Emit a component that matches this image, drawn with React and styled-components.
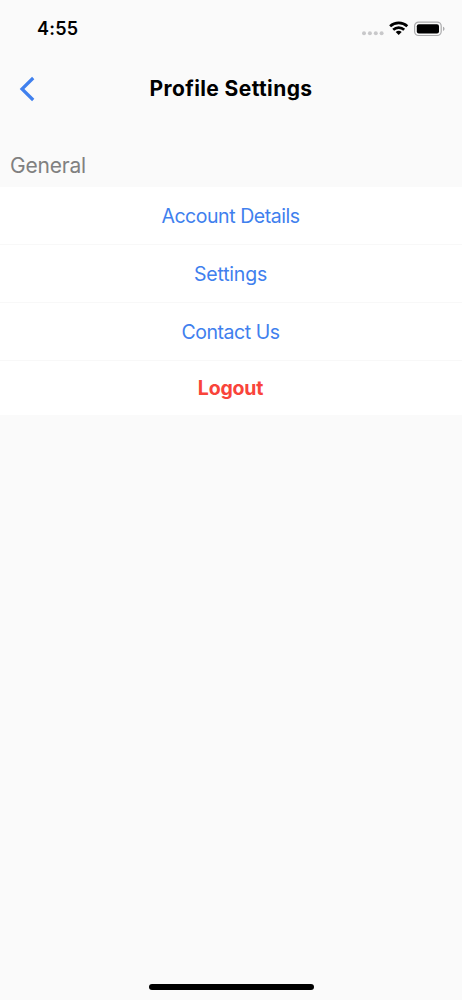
import React from 'react';
import styled, { createGlobalStyle } from 'styled-components';

const GlobalStyle = createGlobalStyle`
  * {
    box-sizing: border-box;
  }

  body {
    margin: 0;
    background: #fafafa;
    font-family: Inter, "Liberation Sans", sans-serif;
  }
`;

const Screen = styled.div`
  display: flex;
  flex-direction: column;
  height: 1000px;
  overflow: hidden;
  background: #fafafa;
`;

const StatusBar = styled.div`
  display: flex;
  align-items: center;
  justify-content: space-between;
  height: 57px;
  padding: 0 17px 0 37px;
`;

const Time = styled.span`
  font-size: 18px;
  font-weight: 600;
  letter-spacing: 0.2px;
  color: #000;
`;

const StatusIcons = styled.svg`
  display: block;
  width: 84px;
  height: 20px;
`;

const Header = styled.header`
  display: grid;
  grid-template-columns: 54px 1fr 54px;
  align-items: center;
  height: 64px;
`;

const BackButton = styled.button`
  display: flex;
  padding: 0 0 0 18px;
  border: 0;
  background: none;

  svg {
    display: block;
  }
`;

const Title = styled.h1`
  margin: 0;
  font-size: 21px;
  font-weight: 650;
  line-height: 26px;
  letter-spacing: 0.4px;
  text-align: center;
  white-space: nowrap;
  color: #000;
`;

const SectionTitle = styled.h2`
  margin: 0;
  padding: 32px 10px 8px;
  font-size: 21px;
  font-weight: 400;
  line-height: 26px;
  letter-spacing: -0.2px;
  color: #808080;
`;

const Item = styled.button`
  display: block;
  width: 100%;
  height: ${props => (props.$danger ? '54px' : '58px')};
  padding: 0 1px 0 0;
  border: 0;
  border-bottom: ${props => (props.$danger ? '0' : '1px solid #f8f8f8')};
  background: #fff;
  font-family: inherit;
  font-size: 19.5px;
  font-weight: ${props => (props.$danger ? 650 : 400)};
  color: ${props => (props.$danger ? '#f9443a' : '#4080ee')};
  letter-spacing: ${props => props.$spacing};
`;

const HomeBar = styled.div`
  width: 165px;
  height: 6px;
  margin: auto auto 10px 149px;
  border-radius: 3px;
  background: #000;
`;

const items = [
  { label: 'Account Details', spacing: '-0.45px' },
  { label: 'Settings', spacing: '-0.2px' },
  { label: 'Contact Us', spacing: '-0.45px' },
  { label: 'Logout', spacing: '-0.2px', danger: true },
];

export default function App() {
  return (
    <Screen>
      <GlobalStyle />
      <StatusBar>
        <Time>4:55</Time>
        <StatusIcons viewBox="0 0 84 20">
          <g fill="#c8c8ca">
            <circle cx="3" cy="14.3" r="2" />
            <circle cx="8.9" cy="14.3" r="2" />
            <circle cx="14.8" cy="14.3" r="2" />
            <circle cx="20.6" cy="14.3" r="2" />
          </g>
          <g fill="none" stroke="#000" strokeWidth="2.7">
            <path d="M29.1 7.2a12.6 12.6 0 0 1 17.2 0" />
            <path d="M32.2 10.8a8 8 0 0 1 11 0" />
          </g>
          <path d="M34.7 13.1a4.4 4.4 0 0 1 6 0l-3 3z" fill="#000" />
          <rect x="53.6" y="3.1" width="26.6" height="13.4" rx="4" fill="none" stroke="#aaaaac" strokeWidth="1.2" />
          <rect x="55.8" y="5.2" width="22.2" height="9.2" rx="2" fill="#000" />
          <path d="M82 7.7c2 .7 2 3.5 0 4.2z" fill="#aaaaac" />
        </StatusIcons>
      </StatusBar>
      <Header>
        <BackButton aria-label="Back">
          <svg width="18" height="26" viewBox="0 0 18 26">
            <path d="M15.2 2L4 13l11.2 11" fill="none" stroke="#4080ee" strokeWidth="3.2" />
          </svg>
        </BackButton>
        <Title>Profile Settings</Title>
      </Header>
      <SectionTitle>General</SectionTitle>
      {items.map(item => (
        <Item key={item.label} $danger={item.danger} $spacing={item.spacing}>
          {item.label}
        </Item>
      ))}
      <HomeBar />
    </Screen>
  );
}
